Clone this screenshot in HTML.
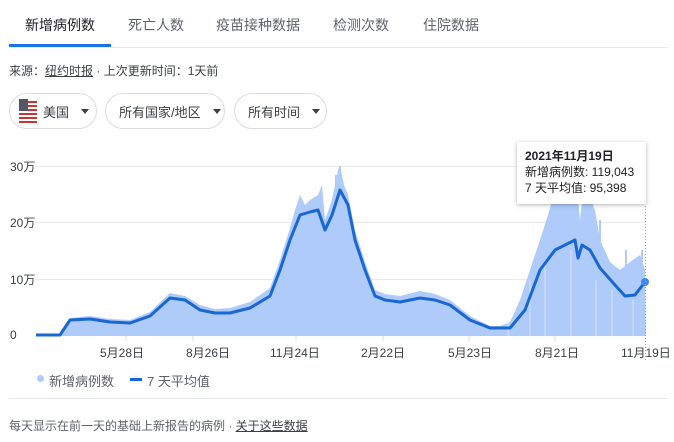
<!DOCTYPE html>
<html><head><meta charset="utf-8"><style>
*{margin:0;padding:0;box-sizing:border-box}
body{width:674px;height:442px;background:#fff;font-family:"Liberation Sans","Noto Sans CJK SC",sans-serif;color:#202124;position:relative;overflow:hidden}
.tab{position:absolute;top:15px;font-size:14px;color:#5f6368;white-space:nowrap}
.ab{position:absolute;white-space:nowrap}
.chip{position:absolute;top:93px;height:36px;border:1px solid #dadce0;border-radius:18px;font-size:13px;display:flex;align-items:center;color:#3c4043;white-space:nowrap}
.tri{display:inline-block;width:0;height:0;border-left:4px solid transparent;border-right:4px solid transparent;border-top:5px solid #3c4043;margin-left:12px}
.yl{position:absolute;left:10px;font-size:12px;color:#3c4043}
.xl{position:absolute;top:344px;font-size:12px;color:#3c4043;white-space:nowrap}
</style></head><body>
<div class="tab" style="left:25px;color:#202124">新增病例数</div>
<div class="tab" style="left:128px">死亡人数</div>
<div class="tab" style="left:216px">疫苗接种数据</div>
<div class="tab" style="left:333px">检测次数</div>
<div class="tab" style="left:423px">住院数据</div>
<div class="ab" style="left:9px;top:44px;width:102px;height:3px;background:#1a73e8"></div>
<div class="ab" style="left:9px;top:47px;width:659px;height:1px;background:#e8eaed"></div>
<div class="ab" style="left:9px;top:62px;font-size:12px;color:#3c4043">来源：<span style="text-decoration:underline">纽约时报</span> · 上次更新时间：1天前</div>
<div class="chip" style="left:9px;width:88px;padding-left:9px"><svg width="18" height="24" viewBox="0 0 18 24"><rect x="0" y="0" width="18" height="24" rx="3" fill="#fff"/><g fill="#c33"><rect y="2" width="18" height="2"/><rect y="6" width="18" height="2"/><rect y="10" width="18" height="2"/><rect y="14" width="18" height="2"/><rect y="18" width="18" height="2"/><rect y="22" width="18" height="2"/></g><rect x="0" y="0" width="9" height="12" fill="#556"/></svg><span style="margin-left:6px">美国</span><span class="tri"></span></div>
<div class="chip" style="left:105px;width:120px;padding-left:13px">所有国家/地区<span class="tri"></span></div>
<div class="chip" style="left:234px;width:93px;padding-left:13px">所有时间<span class="tri"></span></div>
<div class="yl" style="top:158px">30万</div>
<div class="yl" style="top:214px">20万</div>
<div class="yl" style="top:271px">10万</div>
<div class="yl" style="top:328px">0</div>
<svg class="ab" style="left:0;top:0" width="674" height="442">
<g stroke="#e8eaed" stroke-width="1"><line x1="36" y1="166.5" x2="646" y2="166.5"/><line x1="36" y1="222.5" x2="646" y2="222.5"/><line x1="36" y1="279.5" x2="646" y2="279.5"/><line x1="36" y1="335.5" x2="646" y2="335.5"/></g>
<polygon fill="#aecbfa" points="36,336 60,335 70,318 90,316 110,319 130,320 150,312 170,293 185,296 200,305 215,309 230,308 250,302 270,288 280,260 290,228 295,210 300,195 305,205 310,200 318,195 322,185 325,220 332,200 338,170 340,166 344,185 348,195 355,230 365,262 375,290 385,294 400,296 420,291 435,294 450,300 470,316 490,326 500,326 510,322 520,300 530,270 540,240 548,215 555,190 560,166 565,200 570,175 575,166 580,220 585,175 590,200 595,210 600,240 610,262 620,270 630,262 640,255 645,270 646,336"/>
<g stroke="#aecbfa" stroke-width="2"><line x1="553" y1="336" x2="553" y2="168"/><line x1="561" y1="336" x2="561" y2="166"/><line x1="567" y1="336" x2="567" y2="170"/><line x1="575" y1="336" x2="575" y2="166"/><line x1="584" y1="336" x2="584" y2="166"/><line x1="592" y1="336" x2="592" y2="180"/><line x1="587" y1="336" x2="587" y2="205"/><line x1="600" y1="336" x2="600" y2="220"/><line x1="626" y1="336" x2="626" y2="250"/><line x1="642" y1="336" x2="642" y2="250"/><line x1="340" y1="336" x2="340" y2="166"/><line x1="300" y1="336" x2="300" y2="200"/><line x1="336" y1="336" x2="336" y2="175"/></g>
<g stroke="#fff" stroke-width="1" opacity=".5"><line x1="508" y1="336" x2="508" y2="300"/><line x1="530" y1="336" x2="530" y2="280"/><line x1="545" y1="336" x2="545" y2="260"/><line x1="571" y1="336" x2="571" y2="250"/><line x1="596" y1="336" x2="596" y2="280"/><line x1="612" y1="336" x2="612" y2="290"/><line x1="633" y1="336" x2="633" y2="300"/></g>
<polyline fill="none" stroke="#1967d2" stroke-width="3" stroke-linejoin="round" points="36,335 60,335 70,320 90,319 110,322 130,323 150,316 170,298 185,300 200,310 215,313 230,313 250,308 270,296 280,270 290,240 300,215 310,212 318,210 325,230 332,215 340,190 348,205 355,240 365,270 375,296 385,300 400,302 420,298 435,300 450,305 470,320 490,328 510,328 525,310 540,270 555,250 565,245 575,240 578,258 582,245 590,250 600,268 615,285 625,296 635,295 645,282"/>
<circle cx="645" cy="282" r="4" fill="#4285f4"/>
<line x1="645.5" y1="200" x2="645.5" y2="360" stroke="#9aa0a6" stroke-dasharray="1,2"/>
<g stroke="#dadce0"><line x1="126" y1="336" x2="126" y2="341"/><line x1="193" y1="336" x2="193" y2="341"/><line x1="296" y1="336" x2="296" y2="341"/><line x1="383" y1="336" x2="383" y2="341"/><line x1="469" y1="336" x2="469" y2="341"/><line x1="555" y1="336" x2="555" y2="341"/></g>
</svg>
<div class="xl" style="left:100px">5月28日</div>
<div class="xl" style="left:186px">8月26日</div>
<div class="xl" style="left:270px">11月24日</div>
<div class="xl" style="left:361px">2月22日</div>
<div class="xl" style="left:448px">5月23日</div>
<div class="xl" style="left:535px">8月21日</div>
<div class="xl" style="left:621px">11月19日</div>
<div class="ab" style="left:517px;top:142px;width:129px;height:62px;background:#fff;box-shadow:0 1px 4px rgba(0,0,0,.3);font-size:12px;padding:6px 0 0 8px;line-height:16px"><b>2021年11月19日</b><br>新增病例数: 119,043<br>7 天平均值: 95,398</div>
<div class="ab" style="left:37px;top:375px;width:7px;height:7px;border-radius:50%;background:#aecbfa"></div>
<div class="ab" style="left:49px;top:371px;font-size:13px;color:#5f6368">新增病例数</div>
<div class="ab" style="left:130px;top:378px;width:12px;height:3px;background:#1967d2"></div>
<div class="ab" style="left:147px;top:371px;font-size:13px;color:#5f6368">7 天平均值</div>
<div class="ab" style="left:9px;top:398px;width:659px;height:1px;background:#e8eaed"></div>
<div class="ab" style="left:9px;top:417px;font-size:12px;color:#5f6368">每天显示在前一天的基础上新报告的病例 · <span style="text-decoration:underline;color:#3c4043">关于这些数据</span></div>
</body></html>
